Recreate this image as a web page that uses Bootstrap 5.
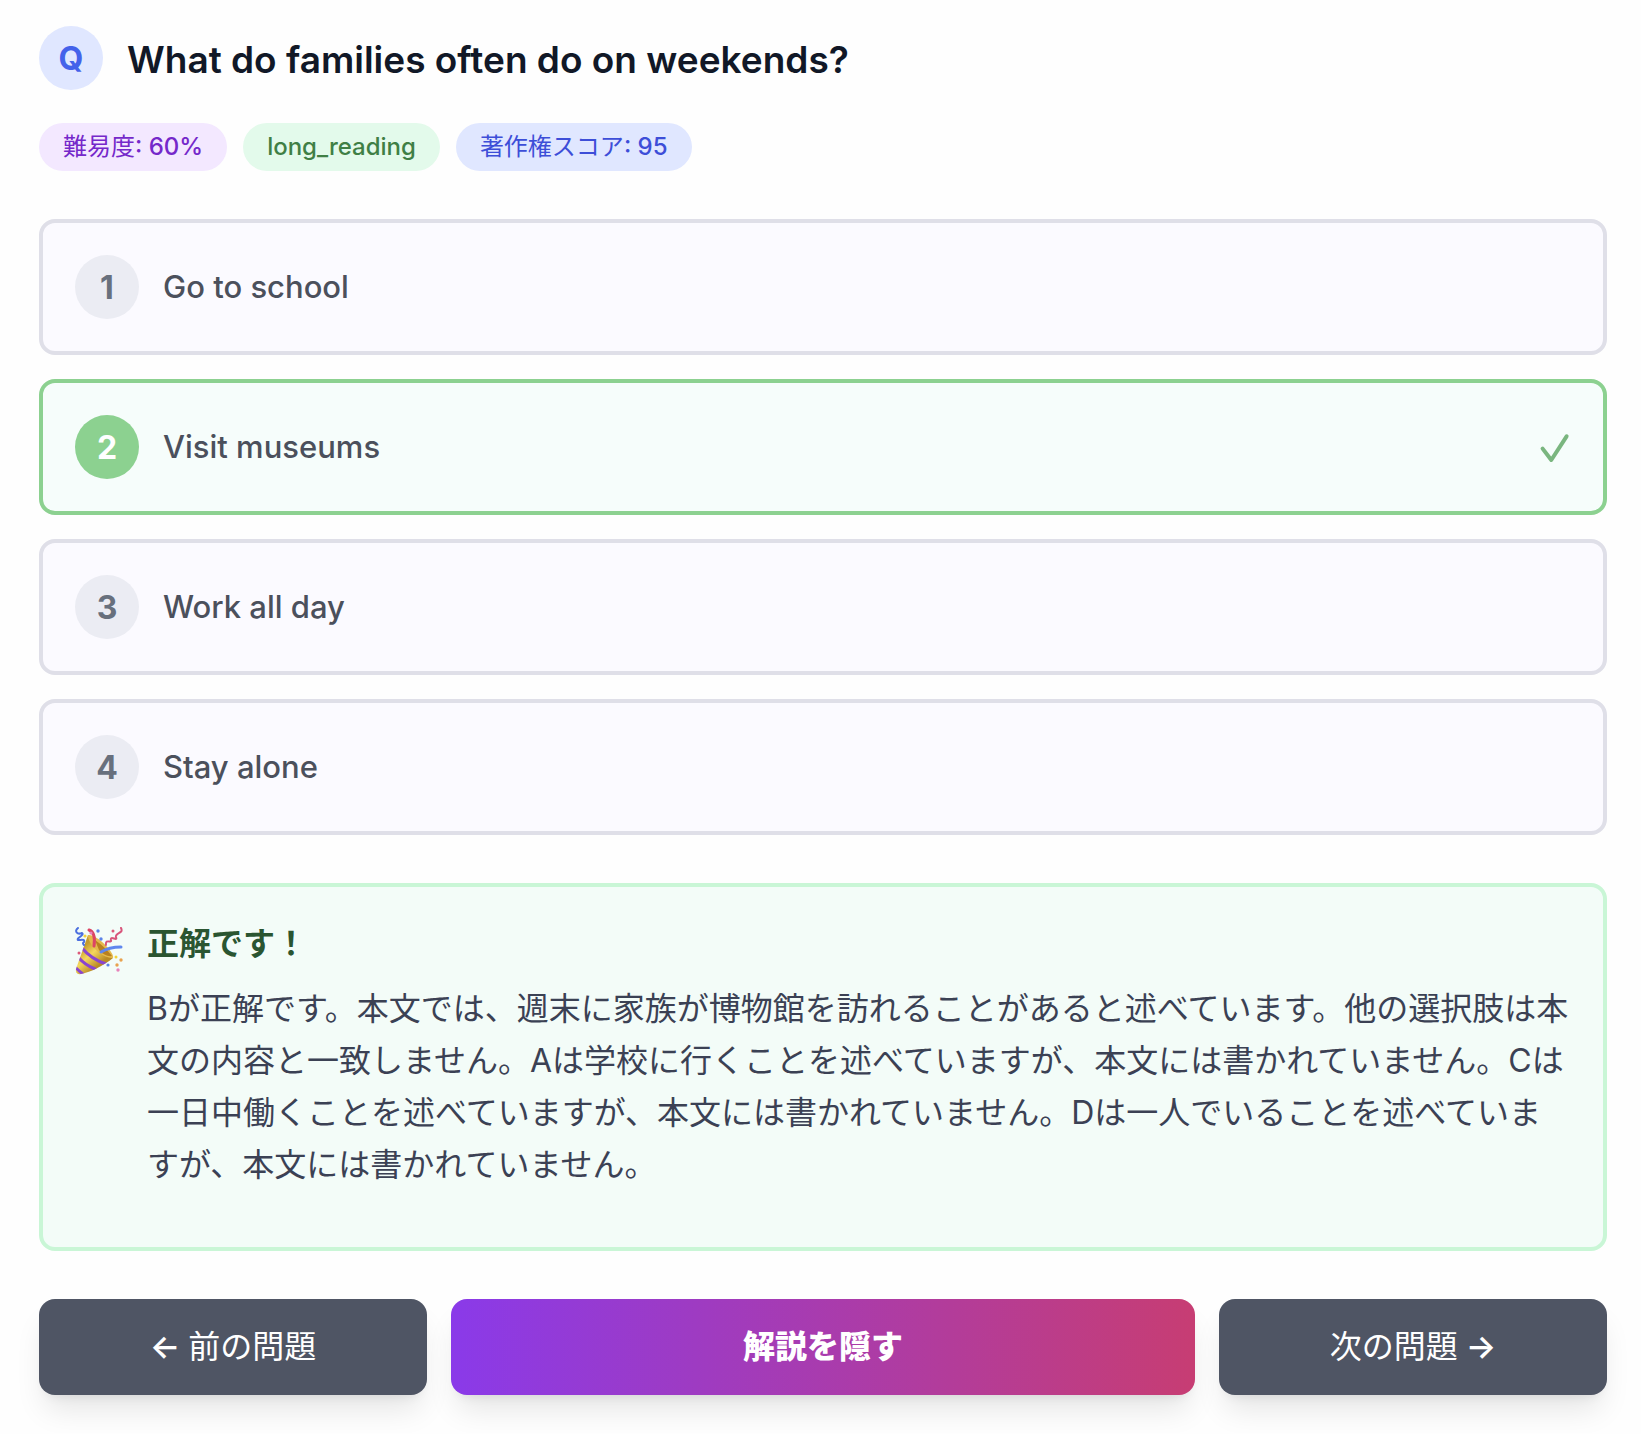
<!DOCTYPE html>
<html lang="ja">
<head>
<meta charset="utf-8">
<meta name="viewport" content="width=device-width, initial-scale=1">
<title>What do families often do on weekends?</title>
<link href="https://cdn.jsdelivr.net/npm/bootstrap@5.3.0/dist/css/bootstrap.min.css" rel="stylesheet">
<style>
  body { font-family: Inter, "Noto Sans CJK JP", sans-serif; background: #fefefe; color: #111827; font-size: 32px; }
  .quiz { padding: 26px 34px 38px 39px; }
  .disc { width: 64px; height: 64px; flex: none; font-size: 32px; font-weight: 700; line-height: 65px; }
  .disc-q { background: #e0e7ff; color: #4462ea; }
  .question { font-size: 37px; line-height: 63px; font-weight: 600; padding-top: 2px; }
  .tags { margin: 32px 0 48px; }
  .tag { font-size: 24px; line-height: 48px; font-weight: 500; padding: 0 24px; }
  .tag-level { background: #f3e8ff; color: #7528ca; }
  .tag-kind { background: #e3faeb; color: #3f7f45; }
  .tag-score { background: #e0e7ff; color: #3d4ed8; }
  .choice { --bs-btn-border-width: 4px; --bs-btn-border-radius: 16px; --bs-btn-padding-x: 32px; --bs-btn-padding-y: 32px;
    --bs-btn-disabled-opacity: 1; --bs-btn-disabled-color: #4b505c; --bs-btn-disabled-bg: #fbfaff; --bs-btn-disabled-border-color: #dfdfe8;
    font-size: 31px; line-height: 64px; font-weight: 500; }
  .choice .disc { background: #ebecf3; color: #68707d; }
  .choice-right { --bs-btn-disabled-bg: #f6fdfb; --bs-btn-disabled-border-color: #8cd190; }
  .choice-right .disc { background: #8cd190; color: #fff; }
  .result { background: #f3fcf8; border: 4px solid #c9f6d6; border-radius: 16px; padding: 32px 32px 56px 32px; color: #3b4154; }
  .result-title { font-size: 32px; line-height: 50px; font-weight: 700; color: #2a5531; margin-bottom: 14px; }
  .result-text { line-height: 52px; }
  .popper { margin-top: 8px; flex: none; }
  .step { --bs-btn-color: #fff; --bs-btn-hover-color: #fff; --bs-btn-bg: #4f5564; --bs-btn-hover-bg: #414755; --bs-btn-border-width: 0; --bs-btn-border-radius: 16px;
    --bs-btn-padding-x: 16px; --bs-btn-padding-y: 24px; flex: 1 1 0; font-size: 32px; line-height: 48px; font-weight: 600;
    box-shadow: 0 20px 30px -6px rgba(0,0,0,.1), 0 8px 12px -8px rgba(0,0,0,.1); }
  .jp { font-weight: 400; }
  .step-main { flex-grow: 2; font-weight: 900; background-image: linear-gradient(to right, #8a3ae9, #c73d73); }
</style>
</head>
<body>
<main class="quiz">
  <header class="d-flex gap-4">
    <span class="disc disc-q rounded-circle text-center">Q</span>
    <h1 class="question mb-0">What do families often do on weekends?</h1>
  </header>

  <div class="tags d-flex flex-wrap gap-3">
    <span class="tag tag-level rounded-pill"><span class="jp">難易度</span>: 60%</span>
    <span class="tag tag-kind rounded-pill">long_reading</span>
    <span class="tag tag-score rounded-pill"><span class="jp">著作権スコア</span>: 95</span>
  </div>

  <div class="d-flex flex-column gap-4">
    <button type="button" class="btn choice d-flex align-items-center gap-4 text-start" disabled><span class="disc rounded-circle text-center">1</span><span>Go to school</span></button>
    <button type="button" class="btn choice choice-right d-flex align-items-center gap-4 text-start" disabled><span class="disc rounded-circle text-center">2</span><span class="flex-grow-1">Visit museums</span>
      <svg width="32" height="32" viewBox="0 0 32 32" fill="none" stroke="#7ab67f" stroke-width="4" stroke-linecap="round" stroke-linejoin="round" aria-hidden="true"><path d="M3.600 17.600L12.300 29L27.600 5.300"/></svg></button>
    <button type="button" class="btn choice d-flex align-items-center gap-4 text-start" disabled><span class="disc rounded-circle text-center">3</span><span>Work all day</span></button>
    <button type="button" class="btn choice d-flex align-items-center gap-4 text-start" disabled><span class="disc rounded-circle text-center">4</span><span>Stay alone</span></button>
  </div>

  <section class="result d-flex gap-4 my-5">
    <svg class="popper" width="48" height="48" viewBox="0 0 48 48" fill="none" stroke-linecap="round" aria-hidden="true">
      <defs>
        <linearGradient id="cone" x1="8" y1="20" x2="24" y2="38" gradientUnits="userSpaceOnUse"><stop stop-color="#c49a2c"/><stop offset=".45" stop-color="#f5d75e"/><stop offset="1" stop-color="#b98a25"/></linearGradient>
        <clipPath id="coneclip"><path d="M13 8C20 10 34 22 38 31C28 39 16 45 6 47Q0 48 1 42Z"/></clipPath>
      </defs>
      <path d="M13 8C20 10 34 22 38 31C28 39 16 45 6 47Q0 48 1 42Z" fill="url(#cone)"/>
      <g clip-path="url(#coneclip)" stroke="#8a45cf" stroke-width="3"><path d="M7 21Q16 32 31 37"/><path d="M4 31Q10 38 20 42"/><path d="M0 40Q4 44 9 48"/></g>
      <path d="M13 8C12 16 27 32 38 31C40 26 22 7 13 8Z" fill="#e5b94c"/>
      <path d="M20 13Q30 20 37 29Q30 30 24 23Z" fill="#b9801f"/>
      <path d="M14 3C20 5 20 12 19 19" stroke="#dc4565" stroke-width="3"/>
      <path d="M26 25Q34 20 46 20" stroke="#5f87ee" stroke-width="3"/>
      <path d="M3 1C-1 4 2 8 7 6C10 8 1 11 3 13C7 13 10 12 9 15Q7 16 9 18" stroke="#4b6fdf" stroke-width="2"/>
      <path d="M46 1C49 7 40 5 41 10C43 15 35 8 36 13C37 17 30 11 31 18" stroke="#d8557b" stroke-width="2"/>
      <g><circle cx="10" cy="9" r="1.600" fill="#f3d33b"/><circle cx="16" cy="6" r="1.600" fill="#e783bb"/><circle cx="23" cy="4" r="1.700" fill="#5b82e8"/><circle cx="26" cy="12" r="1.700" fill="#5b82e8"/><circle cx="38" cy="4" r="1.500" fill="#dc5a79"/><circle cx="4" cy="26" r="1.500" fill="#dc5a79"/><circle cx="41" cy="30" r="1.500" fill="#f3d33b"/><circle cx="46" cy="33" r="1.700" fill="#e9a24e"/><circle cx="33" cy="38" r="1.600" fill="#5b82e8"/><circle cx="42" cy="38" r="1.700" fill="#e9a24e"/><circle cx="43" cy="43" r="1.700" fill="#e783bb"/></g>
    </svg>
    <div>
      <h2 class="result-title">正解です！</h2>
      <p class="result-text mb-0">Bが正解です。本文では、週末に家族が博物館を訪れることがあると述べています。他の選択肢は本文の内容と一致しません。Aは学校に行くことを述べていますが、本文には書かれていません。Cは一日中働くことを述べていますが、本文には書かれていません。Dは一人でいることを述べていますが、本文には書かれていません。</p>
    </div>
  </section>

  <nav class="d-flex gap-4" aria-label="問題の移動">
    <button type="button" class="btn step">← <span class="jp">前の問題</span></button>
    <button type="button" class="btn step step-main">解説を隠す</button>
    <button type="button" class="btn step"><span class="jp">次の問題</span> →</button>
  </nav>
</main>
<script src="https://cdn.jsdelivr.net/npm/bootstrap@5.3.0/dist/js/bootstrap.bundle.min.js"></script>
</body>
</html>
